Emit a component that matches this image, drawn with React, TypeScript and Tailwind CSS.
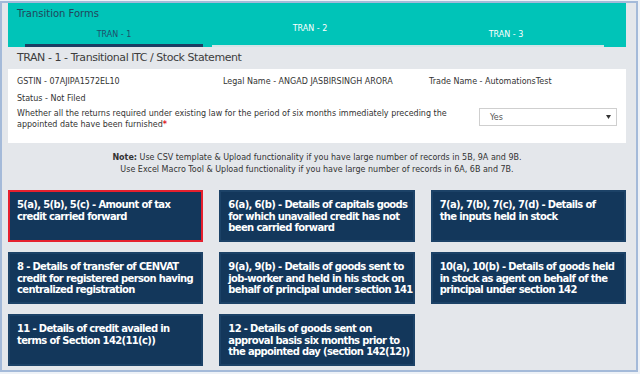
const cards: { lines: string[]; active?: boolean }[] = [
  { lines: ['5(a), 5(b), 5(c) - Amount of tax', 'credit carried forward'], active: true },
  { lines: ['6(a), 6(b) - Details of capitals goods', 'for which unavailed credit has not', 'been carried forward'] },
  { lines: ['7(a), 7(b), 7(c), 7(d) - Details of', 'the inputs held in stock'] },
  { lines: ['8 - Details of transfer of CENVAT', 'credit for registered person having', 'centralized registration'] },
  { lines: ['9(a), 9(b) - Details of goods sent to', 'job-worker and held in his stock on', 'behalf of principal under section 141'] },
  { lines: ['10(a), 10(b) - Details of goods held', 'in stock as agent on behalf of the', 'principal under section 142'] },
  { lines: ['11 - Details of credit availed in', 'terms of Section 142(11(c))'] },
  { lines: ['12 - Details of goods sent on', 'approval basis six months prior to', 'the appointed day (section 142(12))'] },
]

export default function App() {
  return (
    <div className="w-[640px] h-[374px] bg-[#eef2f7] pt-px pr-[2px] pb-[2px] font-['DejaVu_Sans',sans-serif]">
      <div className="h-full border-2 border-[#a4bad9] bg-[#e4e7eb] pl-[6px] pr-[10px]">
        {/* Teal header with tabs */}
        <div className="h-[44px] bg-[#00c4b8] flex flex-col">
          <div className="pl-[9px] pt-[5px] text-[10px] leading-[12px] text-[#21465b]">Transition Forms</div>
          <div className="mt-auto ml-[8px] flex h-[23px]">
            <div className="w-[196px] px-[9px]">
              <div className="h-full border-b-[3px] border-[#1b3e63] pt-[6px] text-center text-[8px] leading-[10px] text-[#1f4f6a]">
                TRAN - 1
              </div>
            </div>
            <div className="w-[196px] border-b-2 border-[#d3e4e6] pt-0 text-center text-[8px] leading-[10px] text-white">
              TRAN - 2
            </div>
            <div className="w-[196px] border-b-2 border-[#d3e4e6] pt-[6px] text-center text-[8px] leading-[10px] text-white">
              TRAN - 3
            </div>
          </div>
        </div>

        {/* Page title */}
        <div className="h-[22px] flex items-center pl-[9px] text-[11px] tracking-[-0.45px] text-[#3d3d3d]">
          TRAN - 1 - Transitional ITC / Stock Statement
        </div>

        {/* Taxpayer details */}
        <div className="h-[74px] bg-white pt-[7px] text-[8px] leading-[11px] text-[#333]">
          <div className="grid grid-cols-3">
            <div className="pl-[9px]">GSTIN - 07AJIPA1572EL10</div>
            <div className="pl-[9px]">Legal Name - ANGAD JASBIRSINGH ARORA</div>
            <div className="pl-[9px]">Trade Name - AutomationsTest</div>
          </div>
          <div className="pl-[9px] mt-[6px]">Status - Not Filed</div>
          <div className="mt-[4px] flex px-[9px]">
            <div className="flex-1">
              Whether all the returns required under existing law for the period of six months immediately preceding the
              <br />
              appointed date have been furnished<span className="font-bold text-[#e0191f]">*</span>
            </div>
            <div className="w-[138px] h-[18px] border border-[#cfcfcf] bg-white flex items-center pl-[10px] pr-[5px] text-[#555]">
              <span className="flex-1">Yes</span>
              <svg width="5" height="4" viewBox="0 0 5 4">
                <path d="M0 0h5L2.5 4z" fill="#333" />
              </svg>
            </div>
          </div>
        </div>

        {/* Note */}
        <div className="pt-[9px] text-center text-[8px] leading-[12px] text-[#333]">
          <div>
            <span className="font-bold">Note:</span> Use CSV template &amp; Upload functionality if you have large number of records in 5B, 9A and 9B.
          </div>
          <div>Use Excel Macro Tool &amp; Upload functionality if you have large number of records in 6A, 6B and 7B.</div>
        </div>

        {/* Table cards */}
        <div className="mt-[14px] grid grid-cols-3 auto-rows-[52px] gap-x-[16px] gap-y-[10px]">
          {cards.map((c, i) => (
            <div
              key={i}
              className={
                c.active
                  ? 'bg-[#13375b] border-2 border-[#e5202e] pl-[7px] pt-[7px]'
                  : 'bg-[#13375b] border-2 border-[#1c4267] pl-[7px] pt-[7px]'
              }
            >
              {c.lines.map((l) => (
                <div key={l} className="whitespace-nowrap text-[10px] leading-[11.7px] font-bold text-white tracking-[-0.65px]">
                  {l}
                </div>
              ))}
            </div>
          ))}
        </div>
      </div>
    </div>
  )
}
